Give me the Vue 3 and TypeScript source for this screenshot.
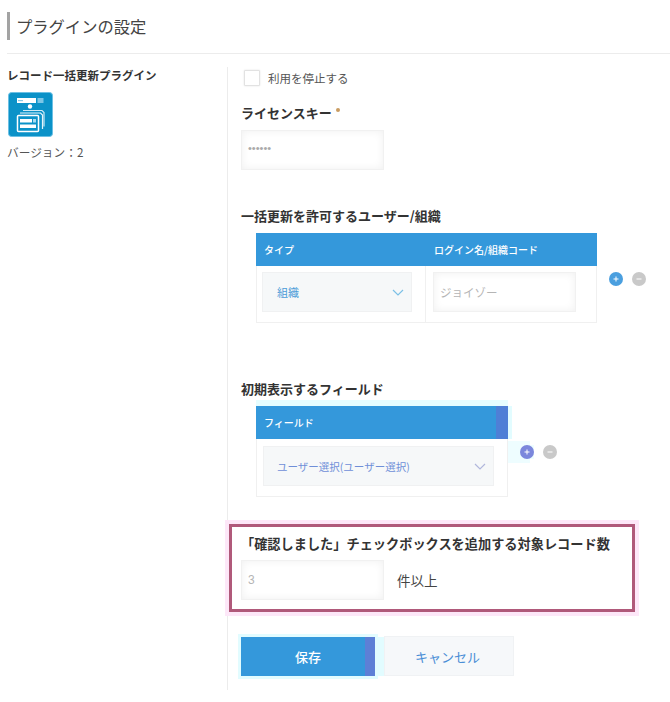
<script setup lang="ts">
const title = 'プラグインの設定'
</script>

<template>
  <div class="page">
    <header class="head"><h1>{{ title }}</h1></header>
    <div class="cols">
      <aside class="side">
        <div class="plugin-name">レコード一括更新プラグイン</div>
        <svg class="logo" viewBox="0 0 45 45" width="45" height="45">
          <rect x="0.5" y="0.5" width="44" height="44" rx="3" fill="#0b92c8" stroke="#6cc0e4" />
          <rect x="9" y="6" width="19" height="5" fill="#fff" />
          <rect x="10" y="8" width="5" height="1.2" fill="#8cc9e4" />
          <rect x="29.500" y="6" width="6" height="5" fill="#7cc6e6" />
          <circle cx="22" cy="14.500" r="2.200" fill="#fff" />
          <path d="M15 18.500h19l2 2v14" fill="none" stroke="#cfeaf6" stroke-width="1.2" />
          <path d="M12 21h20.500l2 2v14" fill="none" stroke="#e4f4fb" stroke-width="1.2" />
          <rect x="9.500" y="23.500" width="21" height="16" rx="1" fill="#0b92c8" stroke="#fff" stroke-width="1.500" />
          <rect x="12" y="27" width="12" height="3.500" fill="#fff" />
          <rect x="25" y="27" width="3" height="3.500" fill="#a8dcf1" />
          <rect x="12" y="32.500" width="16" height="3.500" fill="#fff" />
        </svg>
        <div class="version">バージョン：2</div>
      </aside>

      <main class="form">
        <label class="stop">
          <span class="box"></span>
          <span>利用を停止する</span>
        </label>

        <h2 class="lic">ライセンスキー <i class="req"></i></h2>
        <div class="field dots">••••••</div>

        <h2 class="h-user">一括更新を許可するユーザー/組織</h2>
        <div class="tbl-row">
          <div class="tbl user">
            <div class="thead">
              <span class="th-type">タイプ</span>
              <span>ログイン名/組織コード</span>
            </div>
            <div class="tbody">
              <div class="cell c1">
                <div class="select s1">
                  <span>組織</span>
                  <svg class="chev" viewBox="0 0 12 7" width="12" height="7"><path d="M1 1l5 5 5-5" /></svg>
                </div>
              </div>
              <div class="cell c2"><div class="field ph login">ジョイゾー</div></div>
            </div>
          </div>
          <div class="ops">
            <svg class="op" viewBox="0 0 14 14" width="14" height="14"><circle cx="7" cy="7" r="7" fill="#4a9fdf" /><path d="M4.500 7h5M7 4.500v5" stroke="#fff" stroke-width="1" /></svg>
            <svg class="op" viewBox="0 0 14 14" width="14" height="14"><circle cx="7" cy="7" r="7" fill="#c9c9c9" /><path d="M4.500 7h5" stroke="#fff" stroke-width="1" /></svg>
          </div>
        </div>

        <h2 class="h-field">初期表示するフィールド</h2>
        <div class="tbl-row">
          <div class="tbl fieldtbl">
            <div class="thead tinted"><span class="th-type">フィールド</span></div>
            <div class="tbody single">
              <div class="select s2">
                <span>ユーザー選択(ユーザー選択)</span>
                <svg class="chev muted" viewBox="0 0 12 7" width="12" height="7"><path d="M1 1l5 5 5-5" /></svg>
              </div>
            </div>
          </div>
          <div class="ops">
            <svg class="op halo" viewBox="0 0 14 14" width="14" height="14"><circle cx="7" cy="7" r="7" fill="#7b87dc" /><path d="M4.500 7h5M7 4.500v5" stroke="#fff" stroke-width="1" /></svg>
            <svg class="op" viewBox="0 0 14 14" width="14" height="14"><circle cx="7" cy="7" r="7" fill="#c9c9c9" /><path d="M4.500 7h5" stroke="#fff" stroke-width="1" /></svg>
          </div>
        </div>

        <section class="highlight">
          <h3>「確認しました」チェックボックスを追加する対象レコード数</h3>
          <div class="count-row">
            <div class="field ph count">3</div>
            <span class="unit">件以上</span>
          </div>
        </section>

        <div class="actions">
          <button class="save" type="button">保存</button>
          <button class="cancel" type="button">キャンセル</button>
        </div>
      </main>
    </div>
  </div>
</template>

<style>
html, body { margin: 0; background: #fff; }
</style>

<style scoped>
.page {
  width: 670px;
  height: 702px;
  overflow: hidden;
  box-sizing: border-box;
  padding: 12px 0 0 7px;
  font-family: "Noto Sans CJK JP", "Noto Sans", sans-serif;
  color: #333;
}
.head { height: 41px; border-bottom: 1px solid #ececec; }
h1 {
  margin: 0;
  height: 28px;
  line-height: 28px;
  border-left: 3px solid #a3a3a3;
  padding-left: 6px;
  font-size: 16.300px;
  font-weight: 400;
  color: #444;
}
.cols { display: flex; margin-top: 13px; }
.side { width: 220px; flex: none; }
.plugin-name { font-size: 11.500px; font-weight: 700; line-height: 17px; color: #333; }
.logo { display: block; margin: 8px 0 0 1px; }
.version { margin-top: 6px; font-size: 11.700px; line-height: 18px; color: #555; }
.form {
  width: 420px;
  height: 623px;
  border-left: 1px solid #ececec;
  padding-left: 13px;
}
.stop { display: flex; align-items: center; gap: 8px; margin: 3px 0 0 3px; font-size: 11.500px; line-height: 16px; color: #555; }
.box { width: 14px; height: 14px; border: 1px solid #e2e2e2; border-radius: 1px; background: #fff; box-shadow: 0 0 2px #e0e0e0; }
h2 { margin: 0; font-size: 13px; font-weight: 700; line-height: 20px; color: #333; }
.lic { margin-top: 17px; }
.req { display: inline-block; width: 4px; height: 4px; margin-left: 1px; border-radius: 50%; background: #c99c62; vertical-align: 6px; }
.field {
  box-sizing: border-box;
  width: 143px;
  height: 40px;
  padding-left: 6px;
  display: flex;
  align-items: center;
  border: 1px solid #f1f1f1;
  background: #fff;
  box-shadow: inset 0 0 8px #f0f0f0;
  font-size: 13px;
}
.dots { margin-top: 7px; font-family: "Liberation Sans", sans-serif; font-size: 11px; color: #aaa; padding-bottom: 5px; }
.ph { color: #b5b5b5; }
.login { font-size: 11.500px; }
.h-user { margin-top: 36px; }
.h-field { margin-top: 56px; }
.tbl-row { display: flex; margin: 7px 0 0 15px; }
.tbl { box-sizing: border-box; flex: none; }
.user { width: 341px; }
.fieldtbl { width: 252px; box-shadow: 0 -6px 0 #e6fdff; }
.thead {
  height: 33px;
  display: flex;
  align-items: center;
  background: #3498db;
  color: #fff;
  font-size: 10px;
  font-weight: 500;
}
.th-type { width: 178px; padding-left: 8px; box-sizing: border-box; }
.tinted {
  background: linear-gradient(90deg, #3498db 95.400%, #4f7fd6 95.400%);
  box-shadow: 4px 0 0 #e2fcff;
}
.tbody {
  display: flex;
  height: 57px;
  box-sizing: border-box;
  border: 1px solid #f0f0f0;
  border-top: 0;
}
.cell { box-sizing: border-box; padding-top: 6px; }
.c1 { width: 169px; padding-left: 5px; border-right: 1px solid #f0f0f0; }
.c2 { padding-left: 7px; }
.select {
  box-sizing: border-box;
  height: 40px;
  display: flex;
  align-items: center;
  justify-content: space-between;
  background: #f6f8f9;
  border: 1px solid #f0f1f2;
  font-size: 11px;
  color: #4a9bd8;
}
.s1 { width: 150px; padding: 0 7px 0 14px; }
.s2 { width: 231px; margin: 7px 0 0 6px; padding: 0 7px 0 13px; color: #6f8fd8; font-size: 10.500px; }
.single { height: 58px; }
.chev { fill: none; stroke: #7cc0e6; stroke-width: 1.200; }
.chev.muted { stroke: #b1b7dc; }
.ops { display: flex; gap: 9px; align-items: flex-start; margin: 39px 0 0 12px; }
.op { display: block; flex: none; }
.halo { box-shadow: -8px 0 0 4px #eefdff; background: #eefdff; }
.highlight {
  box-sizing: border-box;
  width: 406px;
  height: 88px;
  margin: 27px 0 0 -12px;
  border: 3px solid #b0597a;
  box-shadow: 0 0 0 4px #fde7f8;
  padding: 8px 0 0 9px;
}
h3 { margin: 0; font-size: 13.200px; font-weight: 700; line-height: 18px; color: #333; white-space: nowrap; }
.count-row { display: flex; align-items: center; margin-top: 7px; }
.count { padding-left: 6px; font-family: "Liberation Sans", sans-serif; font-size: 12px; }
.unit { margin-left: 13px; font-size: 13.500px; color: #444; }
.actions { display: flex; align-items: center; margin-top: 24px; }
button { font-family: inherit; border: 0; padding: 0; cursor: pointer; }
.save {
  width: 134px;
  height: 39px;
  background: linear-gradient(90deg, #3498db 92.500%, #5d7fd6 92.500%);
  color: #fff;
  font-size: 13px;
  font-weight: 500;
  box-shadow: 0 0 0 3px #e2fcff, 9px 0 0 0 #e2fcff;
}
.cancel {
  width: 130px;
  height: 40px;
  margin-left: 9px;
  padding-right: 3px;
  background: #f6f8fa;
  border: 1px solid #f0f2f4;
  color: #4a8ed6;
  font-size: 13px;
}
</style>
